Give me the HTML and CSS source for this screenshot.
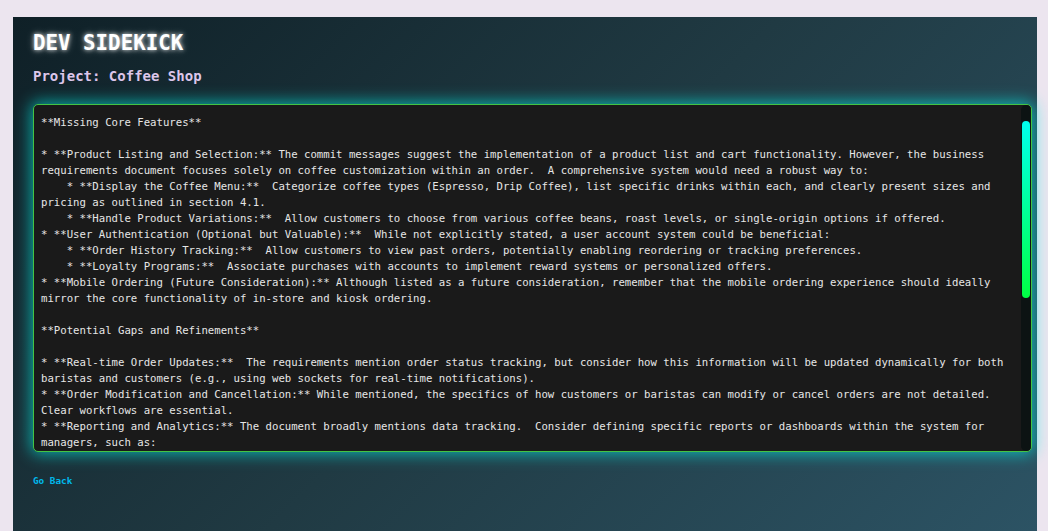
FILE: index.html
```html
<!DOCTYPE html>
<html lang="en">
<head>
<meta charset="utf-8">
<title>Dev Sidekick</title>
<link rel="stylesheet" href="styles.css">
</head>
<body>
<main class="panel">
  <h1 class="brand">DEV SIDEKICK</h1>
  <h2 class="project">Project: Coffee Shop</h2>
  <div class="output-box">
  <div class="output">**Missing Core Features**

* **Product Listing and Selection:** The commit messages suggest the implementation of a product list and cart functionality. However, the business requirements document focuses solely on coffee customization within an order.  A comprehensive system would need a robust way to:
    * **Display the Coffee Menu:**  Categorize coffee types (Espresso, Drip Coffee), list specific drinks within each, and clearly present sizes and pricing as outlined in section 4.1.
    * **Handle Product Variations:**  Allow customers to choose from various coffee beans, roast levels, or single-origin options if offered.
* **User Authentication (Optional but Valuable):**  While not explicitly stated, a user account system could be beneficial:
    * **Order History Tracking:**  Allow customers to view past orders, potentially enabling reordering or tracking preferences.
    * **Loyalty Programs:**  Associate purchases with accounts to implement reward systems or personalized offers.
* **Mobile Ordering (Future Consideration):** Although listed as a future consideration, remember that the mobile ordering experience should ideally mirror the core functionality of in-store and kiosk ordering.

**Potential Gaps and Refinements**

* **Real-time Order Updates:**  The requirements mention order status tracking, but consider how this information will be updated dynamically for both baristas and customers (e.g., using web sockets for real-time notifications).
* **Order Modification and Cancellation:** While mentioned, the specifics of how customers or baristas can modify or cancel orders are not detailed. Clear workflows are essential.
* **Reporting and Analytics:** The document broadly mentions data tracking.  Consider defining specific reports or dashboards within the system for managers, such as:
    * Sales trends by product category and time period.
    * Peak ordering hours and average order fulfillment time.
    * Popular customizations and add-ons.
    * Staff performance and order accuracy.
* **Inventory Management:**  Consider how the system will track ingredient stock and handle out-of-stock items.
* **Payment Processing:**  Specify supported payment methods (credit card, mobile wallets, gift cards) and how refunds are handled.
* **Accessibility:**  Ensure the kiosk and web interfaces meet accessibility standards (e.g., WCAG 2.1) for all customers.

**Recommendations**

1. **Prioritize the product catalog:**  Build out menu browsing and product selection before expanding customization features.
2. **Define clear order workflows:**  Document the full order lifecycle, including modification, cancellation, and refunds.
3. **Plan for real-time updates early:**  Choosing the right architecture now will simplify later mobile ordering.
4. **Gather feedback from baristas:**  Validate the order queue and status screens with staff before launch.

By addressing these gaps, the Coffee Shop system will better align with the business requirements and deliver a smoother experience.</div>
  <div class="scrollbar"><div class="scrollbar-thumb"></div></div>
  </div>
  <a class="back" href="#">Go Back</a>
</main>
</body>
</html>
```

FILE: styles.css
```css
html, body {
  margin: 0;
  padding: 0;
  height: 100%;
  overflow: hidden;
}

body {
  background: #ece5ef;
  font-family: "DejaVu Sans Mono", "Liberation Mono", monospace;
}

.panel {
  box-sizing: border-box;
  width: 1024px;
  height: calc(100vh - 17px);
  margin: 17px 0 0 13px;
  padding: 14px 20px 20px;
  background: linear-gradient(135deg, #0f2027 0%, #203a43 50%, #2c5364 100%);
  display: flex;
  flex-direction: column;
  align-items: flex-start;
}

.brand {
  margin: 0;
  font-size: 20.8px;
  font-weight: bold;
  color: #ffffff;
  text-shadow: 0 0 4px rgba(255, 255, 255, 0.85), 0 0 9px rgba(255, 255, 255, 0.35);
}

.project {
  margin: 13px 0 0;
  font-size: 14px;
  font-weight: bold;
  color: #dcc6ea;
}

.output-box {
  position: relative;
  box-sizing: border-box;
  width: calc(100% + 15px);
  height: 348px;
  margin-top: 20px;
  background: #1a1a1a;
  border: 1px solid #44c444;
  border-radius: 5px;
  box-shadow: 0 0 16px 2px rgba(0, 240, 230, 0.65);
}

.output {
  box-sizing: border-box;
  height: 100%;
  padding: 10px 17px 9px 7px;
  color: #e6e6e6;
  font-size: 10.667px;
  line-height: 16px;
  white-space: pre-wrap;
  word-wrap: break-word;
  overflow: hidden;
}

.scrollbar {
  position: absolute;
  top: 0;
  right: 0;
  bottom: 0;
  width: 10px;
  background: #0c1313;
  border-radius: 5px;
}

.scrollbar-thumb {
  margin: 16px 1px 0;
  height: 177px;
  border-radius: 5px;
  background: linear-gradient(180deg, #00ffee 0%, #00ff44 100%);
}

.back {
  margin-top: 23px;
  font-size: 9.333px;
  font-weight: bold;
  color: #00b8ec;
  text-decoration: none;
}
```
